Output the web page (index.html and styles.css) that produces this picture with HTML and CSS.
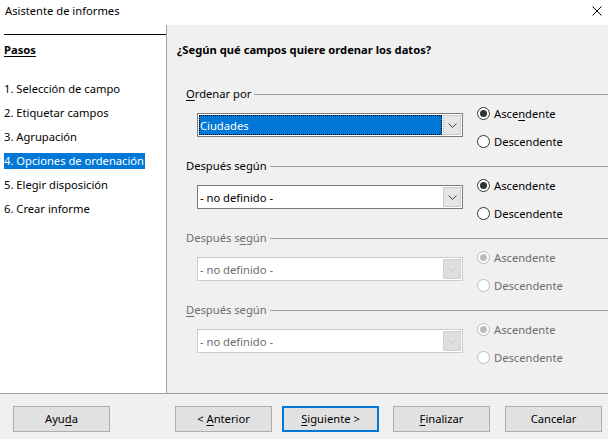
FILE: index.html
```html
<!DOCTYPE html>
<html lang="es">
<head>
<meta charset="utf-8">
<title>Asistente de informes</title>
<link rel="stylesheet" href="styles.css">
</head>
<body>
<div class="window">
  <div class="titlebar">
    <span class="title">Asistente de informes</span>
    <svg class="close" width="10" height="10" viewBox="0 0 10 10"><path d="M0.5 0.5 L9.5 9.5 M9.5 0.5 L0.5 9.5" stroke="#000" stroke-width="1" fill="none"/></svg>
  </div>
  <div class="main">
    <div class="steps">
      <div class="steps-head"><span class="u">Pasos</span></div>
      <ul class="step-list">
        <li>1. Selección de campo</li>
        <li>2. Etiquetar campos</li>
        <li>3. Agrupación</li>
        <li><span class="sel">4. Opciones de ordenación</span></li>
        <li>5. Elegir disposición</li>
        <li>6. Crear informe</li>
      </ul>
    </div>
    <div class="content">
      <div class="heading">¿Según qué campos quiere ordenar los datos?</div>

      <div class="group">
        <div class="legend"><span class="legend-text"><span class="u">O</span>rdenar por</span><span class="rule"></span></div>
        <div class="row">
          <div class="combo focused"><span class="combo-text"><span class="focus-text">Ciudades</span></span><span class="combo-btn"><svg width="9" height="5" viewBox="0 0 9 5"><path d="M0.5 0.5 L4.5 4.5 L8.5 0.5" stroke="#444" fill="none"/></svg></span></div>
          <div class="radios">
            <label class="radio"><span class="dot checked"></span>Asce<span class="u">n</span>dente</label>
            <label class="radio"><span class="dot"></span>Descendente</label>
          </div>
        </div>
      </div>

      <div class="group">
        <div class="legend"><span class="legend-text">Después según</span><span class="rule"></span></div>
        <div class="row">
          <div class="combo"><span class="combo-text">- no definido -</span><span class="combo-btn"><svg width="9" height="5" viewBox="0 0 9 5"><path d="M0.5 0.5 L4.5 4.5 L8.5 0.5" stroke="#444" fill="none"/></svg></span></div>
          <div class="radios">
            <label class="radio"><span class="dot checked"></span>Ascendente</label>
            <label class="radio"><span class="dot"></span>Descendente</label>
          </div>
        </div>
      </div>

      <div class="group disabled">
        <div class="legend"><span class="legend-text">Después s<span class="u">e</span>gún</span><span class="rule"></span></div>
        <div class="row">
          <div class="combo"><span class="combo-text">- no definido -</span><span class="combo-btn"><svg width="9" height="5" viewBox="0 0 9 5"><path d="M0.5 0.5 L4.5 4.5 L8.5 0.5" stroke="#c8c8c8" fill="none"/></svg></span></div>
          <div class="radios">
            <label class="radio"><span class="dot checked"></span>Ascendente</label>
            <label class="radio"><span class="dot"></span>Descendente</label>
          </div>
        </div>
      </div>

      <div class="group disabled">
        <div class="legend"><span class="legend-text"><span class="u">D</span>espués según</span><span class="rule"></span></div>
        <div class="row">
          <div class="combo"><span class="combo-text">- no definido -</span><span class="combo-btn"><svg width="9" height="5" viewBox="0 0 9 5"><path d="M0.5 0.5 L4.5 4.5 L8.5 0.5" stroke="#c8c8c8" fill="none"/></svg></span></div>
          <div class="radios">
            <label class="radio"><span class="dot checked"></span>Ascendente</label>
            <label class="radio"><span class="dot"></span>Descendente</label>
          </div>
        </div>
      </div>
    </div>
  </div>
  <div class="footer">
    <button class="btn btn-help">Ayu<span class="u">d</span>a</button>
    <button class="btn btn-prev">&lt; <span class="u">A</span>nterior</button>
    <button class="btn btn-next default"><span class="u">S</span>iguiente &gt;</button>
    <button class="btn btn-finish"><span class="u">F</span>inalizar</button>
    <button class="btn btn-cancel">Cancelar</button>
  </div>
</div>
</body>
</html>
```

FILE: styles.css
```css
* { box-sizing: border-box; }
html, body { margin: 0; padding: 0; }
body {
  font-family: "Noto Sans", "Liberation Sans", sans-serif;
  font-size: 11.2px;
  color: #000;
  background: #f0f0f0;
}
.window {
  width: 608px;
  height: 439px;
  display: flex;
  flex-direction: column;
  overflow: hidden;
}
.u { text-decoration: underline; text-underline-offset: 2px; }

.titlebar {
  height: 25px;
  background: #fff;
  display: flex;
  align-items: center;
  justify-content: space-between;
  padding: 0 6px 4px 5px;
  flex: none;
}
.title { line-height: 16px; }
.close { display: block; margin-top: 1px; }

.main {
  height: 368px;
  display: flex;
  flex: none;
}
.steps {
  width: 167px;
  background: #fff;
  border-right: 1px solid #a0a0a0;
  padding: 9px 0 0 4px;
  flex: none;
}
.steps-head {
  border-top: 1px solid #000;
  padding-top: 7px;
  font-weight: bold;
  line-height: 16px;
}
.step-list {
  list-style: none;
  margin: 23px 0 0 0;
  padding: 0;
}
.step-list li {
  line-height: 16px;
  height: 16px;
  margin-bottom: 8px;
  white-space: nowrap;
}
.sel {
  display: inline-block;
  background: #0078d7;
  color: #fff;
  padding-right: 1px;
}

.content {
  flex: 1;
  padding: 17px 0 0 10px;
}
.heading {
  font-weight: bold;
  line-height: 16px;
  height: 16px;
  margin-bottom: 28px;
}
.group {
  margin-left: 9px;
  height: 72px;
}
.legend {
  display: flex;
  align-items: center;
  height: 16px;
}
.legend-text { white-space: nowrap; line-height: 16px; padding-right: 3px; }
.rule {
  flex: 1;
  height: 1px;
  background: #a0a0a0;
}
.row {
  display: flex;
  align-items: flex-start;
}
.combo {
  margin: 11px 0 0 11px;
  width: 266px;
  height: 24px;
  background: #fff;
  border: 1px solid #7a7a7a;
  display: flex;
  align-items: stretch;
  padding: 1px;
}
.combo-text {
  flex: 1;
  display: flex;
  align-items: center;
  padding-left: 1px;
  white-space: nowrap;
}
.focused .combo-text {
  background: #0078d7;
  color: #fff;
  outline: 1px dotted #000;
  outline-offset: -1px;
}
.combo-btn {
  width: 18px;
  margin-left: 1px;
  background: #e5e5e5;
  border: 1px solid #cccccc;
  display: flex;
  align-items: center;
  justify-content: center;
}
.radios {
  margin-left: 14px;
  display: flex;
  flex-direction: column;
  gap: 6px;
}
.radio {
  display: flex;
  align-items: center;
  height: 22px;
  white-space: nowrap;
}
.dot {
  width: 13px;
  height: 13px;
  border-radius: 50%;
  border: 1px solid #333;
  background: #fff;
  margin-right: 4px;
  position: relative;
  flex: none;
}
.dot.checked::after {
  content: "";
  position: absolute;
  left: 2px;
  top: 2px;
  width: 7px;
  height: 7px;
  border-radius: 50%;
  background: #333;
}
.disabled .legend-text { color: #6d6d6d; }
.disabled .combo { border-color: #cccccc; }
.disabled .combo-text { color: #6d6d6d; }
.disabled .combo-btn { background: #dedede; border-color: #d0d0d0; }
.disabled .radio { color: #6d6d6d; }
.disabled .dot { border-color: #bcbcbc; background: #fff; }
.disabled .dot.checked::after { background: #bcbcbc; }

.footer {
  flex: 1;
  border-top: 1px solid #a0a0a0;
  display: flex;
  align-items: flex-start;
  padding: 12px 0 0 13px;
}
.btn {
  width: 97px;
  height: 26px;
  background: #e1e1e1;
  border: 1px solid #adadad;
  font: inherit;
  color: #000;
  padding: 0;
  line-height: 16px;
}
.btn.default { border: 2px solid #0078d7; }
.btn-prev { margin-left: 65px; }
.btn-next { margin-left: 10px; }
.btn-finish { margin-left: 14px; }
.btn-cancel { margin-left: 15px; }
```
